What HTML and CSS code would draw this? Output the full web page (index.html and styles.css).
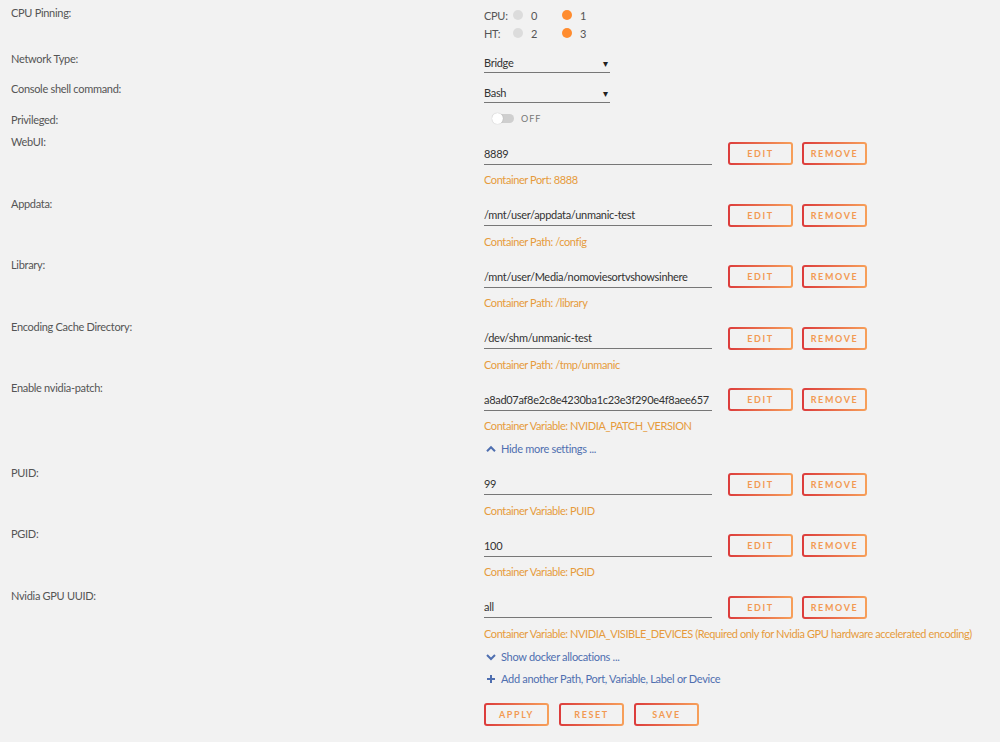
FILE: index.html
```html
<!DOCTYPE html>
<html lang="en">
<head>
    <meta charset="UTF-8">
    <title>Update Container</title>
    <link rel="stylesheet" href="styles.css">
</head>
<body>
    <div class="settings">
        <div class="row top-row">
            <div class="label">CPU Pinning:</div>
            <div class="value">
                <div class="pin-line">
                    <span class="pin-name">CPU:</span>
                    <span class="dot"></span><span class="num">0</span>
                    <span class="dot on"></span><span class="num">1</span>
                </div>
                <div class="pin-line">
                    <span class="pin-name">HT:</span>
                    <span class="dot"></span><span class="num">2</span>
                    <span class="dot on"></span><span class="num">3</span>
                </div>
            </div>
        </div>

        <div class="row select-row net-row">
            <div class="label">Network Type:</div>
            <div class="value">
                <div class="select"><span>Bridge</span><span class="arrow">&#9662;</span></div>
            </div>
        </div>

        <div class="row select-row">
            <div class="label">Console shell command:</div>
            <div class="value">
                <div class="select"><span>Bash</span><span class="arrow">&#9662;</span></div>
            </div>
        </div>

        <div class="row priv-row">
            <div class="label">Privileged:</div>
            <div class="value">
                <span class="switch"><span class="knob"></span></span>
                <span class="switch-text">OFF</span>
            </div>
        </div>

        <div class="row field-row">
            <div class="label">WebUI:</div>
            <div class="value">
                <div class="field-line">
                    <div class="input">8889</div>
                    <button class="btn">EDIT</button>
                    <button class="btn">REMOVE</button>
                </div>
                <div class="hint">Container Port: 8888</div>
            </div>
        </div>

        <div class="row field-row">
            <div class="label">Appdata:</div>
            <div class="value">
                <div class="field-line">
                    <div class="input">/mnt/user/appdata/unmanic-test</div>
                    <button class="btn">EDIT</button>
                    <button class="btn">REMOVE</button>
                </div>
                <div class="hint">Container Path: /config</div>
            </div>
        </div>

        <div class="row field-row">
            <div class="label">Library:</div>
            <div class="value">
                <div class="field-line">
                    <div class="input">/mnt/user/Media/nomoviesortvshowsinhere</div>
                    <button class="btn">EDIT</button>
                    <button class="btn">REMOVE</button>
                </div>
                <div class="hint">Container Path: /library</div>
            </div>
        </div>

        <div class="row field-row">
            <div class="label">Encoding Cache Directory:</div>
            <div class="value">
                <div class="field-line">
                    <div class="input">/dev/shm/unmanic-test</div>
                    <button class="btn">EDIT</button>
                    <button class="btn">REMOVE</button>
                </div>
                <div class="hint">Container Path: /tmp/unmanic</div>
            </div>
        </div>

        <div class="row field-row">
            <div class="label">Enable nvidia-patch:</div>
            <div class="value">
                <div class="field-line">
                    <div class="input">a8ad07af8e2c8e4230ba1c23e3f290e4f8aee657</div>
                    <button class="btn">EDIT</button>
                    <button class="btn">REMOVE</button>
                </div>
                <div class="hint">Container Variable: NVIDIA_PATCH_VERSION</div>
                <div class="link hide-link">
                    <svg viewBox="0 0 10 10" width="10" height="10"><path d="M1 7.2 L5 3.2 L9 7.2" fill="none" stroke="#4f6fb0" stroke-width="2"/></svg>
                    Hide more settings ...
                </div>
            </div>
        </div>

        <div class="row field-row">
            <div class="label">PUID:</div>
            <div class="value">
                <div class="field-line">
                    <div class="input">99</div>
                    <button class="btn">EDIT</button>
                    <button class="btn">REMOVE</button>
                </div>
                <div class="hint">Container Variable: PUID</div>
            </div>
        </div>

        <div class="row field-row">
            <div class="label">PGID:</div>
            <div class="value">
                <div class="field-line">
                    <div class="input">100</div>
                    <button class="btn">EDIT</button>
                    <button class="btn">REMOVE</button>
                </div>
                <div class="hint">Container Variable: PGID</div>
            </div>
        </div>

        <div class="row field-row">
            <div class="label">Nvidia GPU UUID:</div>
            <div class="value">
                <div class="field-line">
                    <div class="input">all</div>
                    <button class="btn">EDIT</button>
                    <button class="btn">REMOVE</button>
                </div>
                <div class="hint">Container Variable: NVIDIA_VISIBLE_DEVICES (Required only for Nvidia GPU hardware accelerated encoding)</div>
                <div class="link show-link">
                    <svg viewBox="0 0 10 10" width="10" height="10"><path d="M1 3 L5 7 L9 3" fill="none" stroke="#4f6fb0" stroke-width="2"/></svg>
                    Show docker allocations ...
                </div>
                <div class="link add-link">
                    <svg viewBox="0 0 10 10" width="10" height="10"><path d="M5 1 V9 M1 5 H9" fill="none" stroke="#4f6fb0" stroke-width="2"/></svg>
                    Add another Path, Port, Variable, Label or Device
                </div>
                <div class="actions">
                    <button class="btn">APPLY</button>
                    <button class="btn">RESET</button>
                    <button class="btn">SAVE</button>
                </div>
            </div>
        </div>
    </div>
</body>
</html>
```

FILE: styles.css
```css
body {
    margin: 0;
    background: #f2f2f2;
    font-family: Lato, "Open Sans", sans-serif;
    font-size: 11px;
    letter-spacing: -0.3px;
    color: #555;
}
.settings {
    padding: 6px 0 0 11px;
}
.row {
    display: grid;
    grid-template-columns: 473px 1fr;
}
.label {
    line-height: 14px;
    color: #555;
}
.priv-row .label,
.field-row .label {
    padding-top: 2px;
}
.top-row {
    margin-bottom: 10px;
}
.pin-line {
    display: flex;
    align-items: center;
    height: 18px;
    color: #555;
}
.pin-name {
    width: 29px;
}
.dot {
    width: 10px;
    height: 10px;
    border-radius: 50%;
    background: #dcdcdc;
}
.dot.on {
    background: #ff8c2f;
}
.num {
    width: 31px;
    padding-left: 8px;
}
.select-row {
    margin-bottom: 8px;
}
.net-row {
    margin-bottom: 9px;
}
.select {
    width: 126px;
    height: 19px;
    border-bottom: 1px solid #777;
    display: flex;
    justify-content: space-between;
    align-items: center;
    color: #333;
    padding-top: 1px;
}
.arrow {
    font-size: 10px;
    color: #222;
    padding-right: 2px;
}
.priv-row {
    margin-bottom: 6px;
}
.priv-row .value {
    display: flex;
    align-items: center;
    height: 14px;
    padding: 0 0 2px 8px;
}
.switch {
    width: 22px;
    height: 9px;
    border-radius: 5px;
    background: #cfcfcf;
    position: relative;
    display: inline-block;
}
.knob {
    position: absolute;
    left: 0;
    top: -1px;
    width: 11px;
    height: 11px;
    border-radius: 50%;
    background: #fff;
    box-shadow: 0 0 1px rgba(0, 0, 0, 0.3);
}
.switch-text {
    margin-left: 7px;
    font-size: 9px;
    letter-spacing: 1px;
    color: #777;
}
.field-row {
    margin-bottom: 7.5px;
}
.field-line {
    display: flex;
    align-items: center;
    margin-top: 9px;
    height: 23px;
}
.input {
    width: 228px;
    height: 21px;
    line-height: 21px;
    border-bottom: 1px solid #777;
    color: #333;
    margin-right: 16px;
    white-space: nowrap;
    overflow: hidden;
}
.btn {
    width: 65px;
    height: 23px;
    margin-right: 9px;
    padding: 0;
    border: 2px solid transparent;
    border-radius: 3px;
    background: linear-gradient(#f2f2f2, #f2f2f2) padding-box,
                linear-gradient(90deg, #dc3c3c, #f7a05a) border-box;
    color: #f29a52;
    font-family: Lato, "Open Sans", sans-serif;
    font-size: 9px;
    font-weight: bold;
    letter-spacing: 1.6px;
}
.hint {
    margin-top: 8px;
    line-height: 14px;
    color: #e69b3c;
    letter-spacing: -0.4px;
    white-space: nowrap;
}
.link {
    line-height: 14px;
    color: #4f6fb0;
    display: flex;
    align-items: center;
    gap: 5px;
    margin-top: 8px;
}
.link svg {
    margin-left: 2px;
}
.hide-link {
    margin-top: 9px;
}
.show-link {
    margin-top: 9px;
}
.add-link {
    margin-top: 8px;
}
.actions {
    display: flex;
    margin-top: 17px;
}
.actions .btn {
    width: 65px;
    margin-right: 10px;
}
```
